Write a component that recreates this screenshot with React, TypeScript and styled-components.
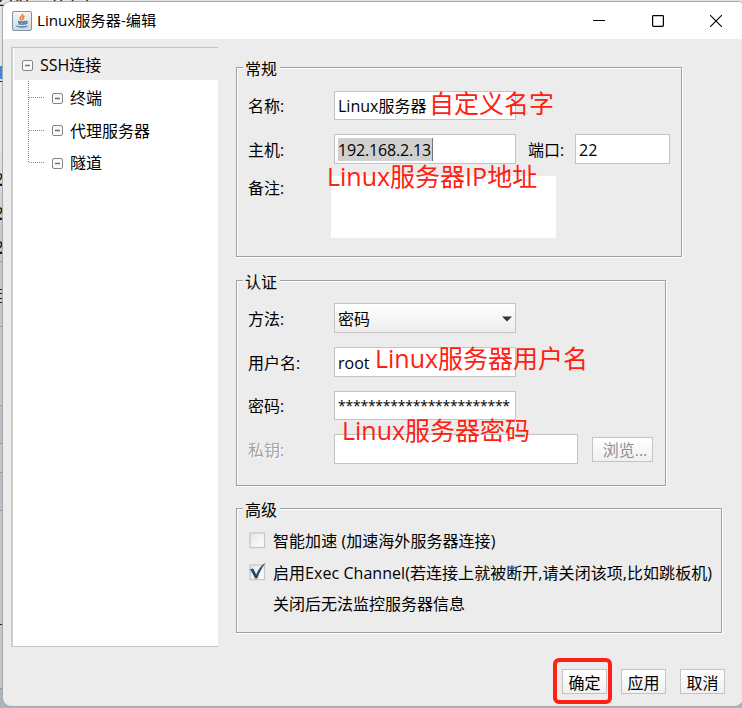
import React from 'react';
import styled, { createGlobalStyle, css } from 'styled-components';

const Global = createGlobalStyle`
  *, *::after { box-sizing: border-box; }
  html, body { margin: 0; padding: 0; }
  body {
    width: 742px; height: 708px; overflow: hidden; background: #c8c8c8;
    font-family: "Open Sans", "Noto Sans CJK SC", sans-serif;
    font-size: 16px; line-height: 20px; color: #000;
  }
`;

const Desktop = styled.div`
  position: relative;
  width: 742px;
  height: 708px;
  overflow: hidden;
  padding: 1px 0 0 2px;
  background: linear-gradient(to bottom, #e4e4e4 0 140px, #c6c6c6 240px 405px, #b5c0cb 405px 443px, #c6c6c6 443px 472px, #b5c0cb 472px 510px, #c6c6c6 510px 688px, #a9b4bf 688px);
`;

const Behind = styled.svg`
  position: absolute;
  left: 0;
  top: 0;
`;

const Window = styled.div`
  position: relative;
  width: 741px;
  height: 706px;
  border: 1px solid #a8a8a8;
  border-right: 0;
  border-radius: 9px 5px 9px 9px;
  background: #ececec;
  overflow: hidden;
`;

const TitleBar = styled.header`
  display: flex;
  align-items: center;
  height: 37px;
  padding-left: 9px;
  background: #fff;
  font-size: 15.2px;
`;

const Title = styled.span`
  margin: -2px 0 0 5px;
  flex: 1;
  white-space: nowrap;
`;

const Controls = styled.div`
  display: flex;
  gap: 46.5px;
  padding-right: 21px;
  svg { display: block; }
`;

const Body = styled.main`
  display: flex;
  padding: 8px 0 0 8px;
`;

const Tree = styled.nav`
  width: 207px;
  height: 600px;
  border: 1px solid #c2c2c2;
  border-left-width: 2px;
  border-left-color: #cdcdcd;
  border-right: 0;
  background: #fff;
`;

const TreeRoot = styled.div`
  display: flex;
  align-items: center;
  height: 32px;
  margin-left: 1px;
  padding: 3px 0 0 8px;
  gap: 7px;
  background: #ededed;
`;

const TreeText = styled.span`
  margin-top: -2px;
`;

const TreeBranch = styled.div`
  display: flex;
  padding-left: 15px;
  > svg { display: block; flex: none; }
`;

const TreeItems = styled.div`
  margin-left: 7px;
  padding-top: 2px;
`;

const TreeItem = styled.div`
  display: flex;
  align-items: center;
  height: 32.5px;
  gap: 7px;
`;

const Content = styled.section`
  margin-left: 18px;
  padding-top: 20px;
  flex: 1;
`;

const Group = styled.section<{ $w: number; $h: number; $gap: number }>`
  width: ${p => p.$w}px;
  height: ${p => p.$h}px;
  margin-bottom: ${p => p.$gap}px;
  padding-left: 11px;
  border: 1px solid #a0a0a0;
  box-shadow: 1px 1px 0 #fff, inset 1px 1px 0 #fff;
`;

const Legend = styled.h2`
  width: 37px;
  height: 20px;
  margin: -9px 0 0 -5px;
  padding-left: 2px;
  background: #ececec;
  font-size: 16px;
  font-weight: 400;
  line-height: 20px;
  white-space: nowrap;
`;

const Row = styled.div<{ $top: number; $h?: number }>`
  position: relative;
  display: flex;
  align-items: center;
  height: ${p => p.$h ?? 30}px;
  margin-top: ${p => p.$top}px;
`;

const Label = styled.label<{ $disabled?: boolean }>`
  width: 86px;
  flex: none;
  padding-top: 1px;
  ${p => p.$disabled && css`color: #a3a3a3; text-shadow: 1px 1px 0 #fff;`}
`;

const PortLabel = styled.label`
  width: 47px;
  margin-left: 12px;
  flex: none;
  padding-top: 1px;
`;

const Field = styled.div<{ $w: number }>`
  display: flex;
  align-items: center;
  width: ${p => p.$w}px;
  height: 100%;
  flex: none;
  padding: 1px 0 0 3px;
  border: 1px solid #c3c3c3;
  background: #fff;
  white-space: nowrap;
`;

const Password = styled(Field)`
  padding-top: 0;
  font-size: 14px;
  letter-spacing: -0.24px;
`;

const Select = styled(Field)`
  justify-content: space-between;
  padding-right: 3px;
  background: linear-gradient(#fff, #ededed);
`;

const Selected = styled.span`
  height: 23px;
  padding-right: 1px;
  margin-top: -1px;
  line-height: 25px;
  letter-spacing: -0.17px;
  border-right: 1px solid #777;
  background: #d0d0d0;
`;

const Notes = styled.div`
  width: 225px;
  height: 62px;
  margin-left: -3px;
  background: #fff;
`;

const NotesRow = styled(Row)`
  align-items: flex-start;
  ${Label} { padding-top: 2px; }
`;

const Button = styled.button<{ $w: number; $disabled?: boolean }>`
  width: ${p => p.$w}px;
  height: 25px;
  flex: none;
  padding: 2px 0 0;
  border: 1px solid #c3c3c3;
  background: linear-gradient(#fff, #f0f0f0);
  color: ${p => (p.$disabled ? '#8e8e8e' : '#000')};
  font: inherit;
  line-height: 20px;
  white-space: nowrap;
`;

const BrowseButton = styled(Button)`
  margin-left: 14px;
  padding-left: 5px;
`;

const Note = styled.span<{ $x: number; $y: number }>`
  position: absolute;
  left: ${p => p.$x}px;
  top: ${p => p.$y}px;
  z-index: 2;
  color: #ff2010;
  font-size: 25px;
  line-height: 30px;
  white-space: nowrap;
`;

const CheckRow = styled.div<{ $top: number }>`
  display: flex;
  align-items: center;
  height: 22px;
  margin-top: ${p => p.$top}px;
  letter-spacing: 0.05px;
  white-space: nowrap;
  svg { display: block; flex: none; margin-right: 5px; overflow: visible; }
`;

const Hint = styled.p`
  margin: 10px 0 0 25px;
`;

const Footer = styled.footer`
  display: flex;
  gap: 14px;
  margin: 22px 0 0 559px;
`;

const Highlight = styled.div`
  position: relative;
  &::after {
    content: '';
    position: absolute;
    left: -9px;
    top: -11px;
    width: 59px;
    height: 46px;
    border: 4px solid #ff2015;
    border-radius: 6px;
  }
`;

const Expander = () => (
  <svg width="11" height="11" viewBox="0 0 11 11">
    <rect x=".5" y=".5" width="10" height="10" rx="1.5" fill="#fafafa" stroke="#858585" />
    <path d="M3 5.5h5" stroke="#707070" strokeWidth="1.3" />
  </svg>
);

const JavaIcon = () => (
  <svg width="20" height="20" viewBox="0 0 20 20">
    <defs>
      <linearGradient id="tile" x1="0" y1="0" x2="0" y2="1">
        <stop offset="0" stopColor="#f7f8f9" />
        <stop offset="1" stopColor="#cbd6df" />
      </linearGradient>
    </defs>
    <rect x=".5" y=".5" width="19" height="19" rx="1.5" fill="url(#tile)" stroke="#7f93a5" />
    <path d="M10.700 3c.8 2-3 2.800-2.500 4.600.2.900 1 1.200 1.300 2M12.500 5.300c-2.500 1.100-1.700 2.300-1.500 3.900" fill="none" stroke="#e5803c" strokeWidth="1.600" />
    <path d="M6 10.500c2 .8 6 .7 7.500 0M6.500 12.500c2 .7 4.700.7 6.300 0M13.600 10.500c2.300-.4 2 2-.6 2.500M4.500 15c2.500 1.300 8.500 1.300 11 0" fill="none" stroke="#4f789e" strokeWidth="1.400" />
  </svg>
);

const Checkbox = ({ on }: { on?: boolean }) => (
  <svg width="20" height="20" viewBox="0 0 20 20">
    <defs>
      <linearGradient id="box" x1="0" y1="0" x2="1" y2="1">
        <stop offset="0" stopColor="#e6e6e6" />
        <stop offset="1" stopColor="#fff" />
      </linearGradient>
    </defs>
    <rect x="2" y="2" width="14.500" height="14.500" fill="url(#box)" stroke="#c6c6c6" strokeWidth="1.300" />
    {on && <path d="M2 6.300 5.200 5.500l3 6C10 6.800 13 2.500 17.600-.3 14 4.500 11 10 9.300 15.500H7C5.500 12 4 9.300 2 6.300z" fill="#2d4a63" />}
  </svg>
);

export default function App() {
  return (
    <Desktop>
      <Global />
      <Behind width="100" height="708">
        <g fontFamily="Noto Sans" fontSize="17" fill="#111">
          <text x="-5" y="6">2.00 -- .0.1.1</text>
          <text x="-6" y="185">2</text>
          <text x="-6" y="219">2</text>
          <text x="-6" y="253">2</text>
        </g>
        <path d="M0 81.500h3M0 185.500h3M0 219.500h3M0 253.500h3M0 289.500h3M0 293.500h3M0 298.500h3M0 302.500h3M0 624.500h3" stroke="#222" />
        <path d="M0 66h3v13H0z" fill="#3987e6" />
        <path d="M0 261.500h3M0 326.500h3M0 405.500h3M0 443.500h3M0 472.500h3M0 510.500h3M0 688.500h3" stroke="#999" />
      </Behind>
      <Window>
        <TitleBar>
          <JavaIcon />
          <Title>Linux服务器-编辑</Title>
          <Controls>
            <svg width="12" height="12"><path d="M0 5.500h12" stroke="#000" /></svg>
            <svg width="12" height="12"><rect x=".6" y=".6" width="10.800" height="10.800" rx=".8" fill="none" stroke="#000" strokeWidth="1.200" /></svg>
            <svg width="12" height="12"><path d="m0 0 12 12M12 0 0 12" stroke="#000" strokeWidth="1.100" /></svg>
          </Controls>
        </TitleBar>
        <Body>
          <Tree>
            <TreeRoot><Expander /><TreeText>SSH连接</TreeText></TreeRoot>
            <TreeBranch>
              <svg width="17" height="90"><path d="M.5 1v82M1 17.500h16M1 50.500h16M1 82.500h16" fill="none" stroke="#888" strokeDasharray="1 1" /></svg>
              <TreeItems>
                <TreeItem><Expander />终端</TreeItem>
                <TreeItem><Expander />代理服务器</TreeItem>
                <TreeItem><Expander />隧道</TreeItem>
              </TreeItems>
            </TreeBranch>
          </Tree>
          <Content>
            <Group $w={446} $h={190} $gap={23}>
              <Legend>常规</Legend>
              <Row $top={12} $h={29}>
                <Label>名称:</Label>
                <Field $w={182}>Linux服务器</Field>
                <Note $x={181} $y={-3}>自定义名字</Note>
              </Row>
              <Row $top={14}>
                <Label>主机:</Label>
                <Field $w={182}><Selected>192.168.2.13</Selected></Field>
                <PortLabel>端口:</PortLabel>
                <Field $w={95}>22</Field>
                <Note $x={79} $y={27}>Linux服务器IP地址</Note>
              </Row>
              <NotesRow $top={12} $h={62}>
                <Label>备注:</Label>
                <Notes />
              </NotesRow>
            </Group>
            <Group $w={430} $h={206} $gap={22}>
              <Legend>认证</Legend>
              <Row $top={11}>
                <Label>方法:</Label>
                <Select $w={182}>密码<svg width="10" height="6"><path d="M0 .5h10L5 5.500z" fill="#333" /></svg></Select>
              </Row>
              <Row $top={14}>
                <Label>用户名:</Label>
                <Field $w={182}>root</Field>
                <Note $x={127} $y={-4}>Linux服务器用户名</Note>
              </Row>
              <Row $top={14} $h={29}>
                <Label>密码:</Label>
                <Password $w={182}>***********************</Password>
                <Note $x={94} $y={24}>Linux服务器密码</Note>
              </Row>
              <Row $top={14}>
                <Label $disabled>私钥:</Label>
                <Field $w={244} />
                <BrowseButton $w={61} $disabled>浏览...</BrowseButton>
              </Row>
            </Group>
            <Group $w={486} $h={125} $gap={0}>
              <Legend>高级</Legend>
              <CheckRow $top={10}><Checkbox />智能加速 (加速海外服务器连接)</CheckRow>
              <CheckRow $top={10}><Checkbox on />启用Exec Channel(若连接上就被断开,请关闭该项,比如跳板机)</CheckRow>
              <Hint>关闭后无法监控服务器信息</Hint>
            </Group>
          </Content>
        </Body>
        <Footer>
          <Highlight><Button $w={45}>确定</Button></Highlight>
          <Button $w={45}>应用</Button>
          <Button $w={45}>取消</Button>
        </Footer>
      </Window>
    </Desktop>
  );
}
